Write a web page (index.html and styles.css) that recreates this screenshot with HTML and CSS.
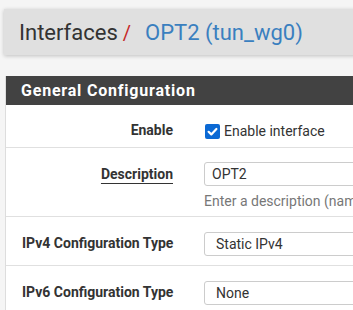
FILE: index.html
```html
<!DOCTYPE html>
<html>
<head>
<meta charset="utf-8">
<link rel="stylesheet" href="styles.css">
</head>
<body>
<div class="page">
  <div class="crumb">
    <span class="crumb-main">Interfaces</span><span class="crumb-sep">/</span><a class="crumb-link">OPT2 (tun_wg0)</a>
  </div>
  <div class="panel">
    <div class="panel-head">General Configuration</div>
    <div class="panel-body">
      <div class="row row-enable">
        <div class="label">Enable</div>
        <div class="control">
          <label class="check"><span class="box"><svg viewBox="0 0 15 15" width="15" height="15"><path d="M3.6 7.8 L6.3 10.4 L11.4 5" fill="none" stroke="#fff" stroke-width="2.2" stroke-linecap="round" stroke-linejoin="round"/></svg></span>Enable interface</label>
        </div>
      </div>
      <div class="row row-desc">
        <div class="label"><span class="u">Description</span></div>
        <div class="control">
          <div class="input">OPT2</div>
          <div class="help">Enter a description (name) for the interface here.</div>
        </div>
      </div>
      <div class="row row-sel">
        <div class="label">IPv4 Configuration Type</div>
        <div class="control"><div class="select">Static IPv4</div></div>
      </div>
      <div class="row row-sel">
        <div class="label">IPv6 Configuration Type</div>
        <div class="control"><div class="select">None</div></div>
      </div>
    </div>
  </div>
</div>
</body>
</html>
```
FILE: styles.css
```css
html, body {
  margin: 0;
  padding: 0;
  background: #f5f5f5;
  overflow: hidden;
  font-family: Roboto, "Liberation Sans", sans-serif;
  color: #212121;
}
.page {
  width: 520px;
  padding: 9px 0 0 4px;
}
.crumb {
  height: 46px;
  box-sizing: border-box;
  background: #e0e0e0;
  box-shadow: 0 1px 4px rgba(0,0,0,0.22);
  padding-left: 15px;
  display: flex;
  align-items: baseline;
  padding-top: 10px;
  font-size: 22px;
  line-height: 28px;
}
.crumb-main { color: #333; }
.crumb-sep { color: #c62828; margin: 0 14px 0 5px; font-size: 20px; }
.crumb-link { color: #3a7fbf; }
.panel {
  margin-top: 21px;
  margin-left: 1px;
  background: #fff;
  border-left: 1px solid #ddd;
}
.panel-head {
  height: 29px;
  background: #424242;
  color: #fff;
  font-weight: 700;
  font-size: 16px;
  letter-spacing: 0.8px;
  line-height: 29px;
  padding-left: 15px;
}
.row {
  display: flex;
  border-bottom: 1px solid #e0e0e0;
}
.label {
  width: 167px;
  flex: none;
  text-align: right;
  font-weight: 700;
  font-size: 14px;
  color: #333;
  box-sizing: border-box;
  white-space: nowrap;
}
.control {
  padding-left: 31px;
  font-size: 14px;
}
.row-enable { height: 43px; box-sizing: border-box; align-items: flex-start; padding-top: 18px; }
.row-enable .label { line-height: 17px; margin-top: -1px; }
.check {
  display: flex;
  align-items: center;
  color: #333;
  font-size: 14px;
}
.box {
  width: 15px;
  height: 15px;
  border-radius: 2px;
  background: #0b69d4;
  margin: 0 4px 0 1px;
  display: inline-flex;
}
.row-desc { height: 69px; box-sizing: border-box; padding-top: 14px; }
.row-desc .label { padding-top: 4px; line-height: 17px; }
.u {
  text-decoration: underline;
  text-underline-offset: 4px;
  text-decoration-thickness: 1px;
}
.input, .select {
  width: 220px;
  height: 24px;
  box-sizing: border-box;
  border: 1px solid #ccc;
  border-radius: 3px;
  background: #fff;
  padding-left: 7px;
  line-height: 22px;
  font-size: 14px;
  color: #333;
}
.help {
  margin-top: 7px;
  color: #777;
  font-size: 14px;
  line-height: 17px;
  white-space: nowrap;
}
.row-sel { height: 49px; box-sizing: border-box; padding-top: 15px; }
.row-sel .label { padding-top: 3px; padding-left: 16px; text-align: left; line-height: 17px; }
.select { padding-left: 11px; }
```
